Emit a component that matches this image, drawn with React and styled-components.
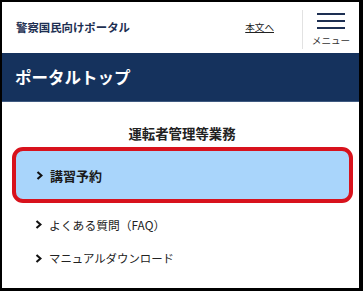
import React from 'react';
import styled, { createGlobalStyle } from 'styled-components';

const GlobalStyle = createGlobalStyle`
  html, body {
    margin: 0;
    padding: 0;
    background: #000;
  }
  body {
    font-family: "Noto Sans CJK JP", "Noto Sans", sans-serif;
  }
`;

const Frame = styled.div`
  width: 363px;
  height: 291px;
  box-sizing: border-box;
  border-style: solid;
  border-color: #000;
  border-width: 2px 4px 3px 2px;
  background: #fff;
  overflow: hidden;
`;

const Header = styled.header`
  height: 51px;
  display: flex;
  align-items: center;
  padding-left: 14px;
  box-sizing: border-box;
`;

const SiteTitle = styled.div`
  flex: 1;
  font-size: 11.4px;
  font-weight: 700;
  color: #1d2f52;
  margin-top: -1px;
`;

const SkipLink = styled.a`
  font-size: 9.6px;
  color: #222;
  text-decoration: underline;
  margin-right: 28px;
  margin-top: -1px;
`;

const MenuButton = styled.div`
  height: 39px;
  width: 57px;
  border-left: 1px solid #e2e2e2;
  display: flex;
  flex-direction: column;
  align-items: center;
  padding-top: 3px;
  box-sizing: border-box;
  margin-top: 3px;
`;

const Bar = styled.span`
  display: block;
  width: 28px;
  height: 2px;
  background: #1d2f52;
  margin-bottom: 5px;
`;

const MenuLabel = styled.span`
  font-size: 9.6px;
  color: #333;
  line-height: 12px;
`;

const Banner = styled.div`
  height: 49px;
  background: #15325d;
  border-bottom: 1px solid #3f5a80;
  box-sizing: border-box;
  display: flex;
  align-items: center;
  padding-left: 13px;
  color: #fff;
  font-size: 16.5px;
  font-weight: 700;
`;

const Content = styled.main`
  padding: 21px 6px 0 10px;
`;

const SectionTitle = styled.h2`
  margin: 0 0 4px;
  text-align: center;
  font-size: 13.4px;
  font-weight: 700;
  color: #222;
  line-height: 20px;
  padding-right: 1px;
`;

const Highlight = styled.div`
  height: 56px;
  box-sizing: border-box;
  border: 4px solid #d8121c;
  border-radius: 11px;
  background: #a9d5fb;
  display: flex;
  align-items: center;
  padding-left: 20px;
  gap: 7px;
  font-size: 13px;
  font-weight: 700;
  color: #1a1a1a;
`;

const LinkRow = styled.div`
  display: flex;
  align-items: center;
  gap: 7px;
  padding-left: 23px;
  height: ${(p) => p.$h}px;
  font-size: ${(p) => p.$size}px;
  color: #222;
`;

const Chevron = () => (
  <svg width="7" height="9" viewBox="0 0 7 9">
    <polyline
      points="1.5,1 5.5,4.5 1.5,8"
      fill="none"
      stroke="#111"
      strokeWidth="2.1"
    />
  </svg>
);

export default function App() {
  return (
    <>
      <GlobalStyle />
      <Frame>
        <Header>
          <SiteTitle>警察国民向けポータル</SiteTitle>
          <SkipLink>本文へ</SkipLink>
          <MenuButton>
            <Bar />
            <Bar />
            <Bar />
            <MenuLabel>メニュー</MenuLabel>
          </MenuButton>
        </Header>
        <Banner>ポータルトップ</Banner>
        <Content>
          <SectionTitle>運転者管理等業務</SectionTitle>
          <Highlight>
            <Chevron />
            講習予約
          </Highlight>
          <LinkRow $h={42} $size={11.8}>
            <Chevron />
            よくある質問（FAQ）
          </LinkRow>
          <LinkRow $h={26} $size={11.4}>
            <Chevron />
            マニュアルダウンロード
          </LinkRow>
        </Content>
      </Frame>
    </>
  );
}
